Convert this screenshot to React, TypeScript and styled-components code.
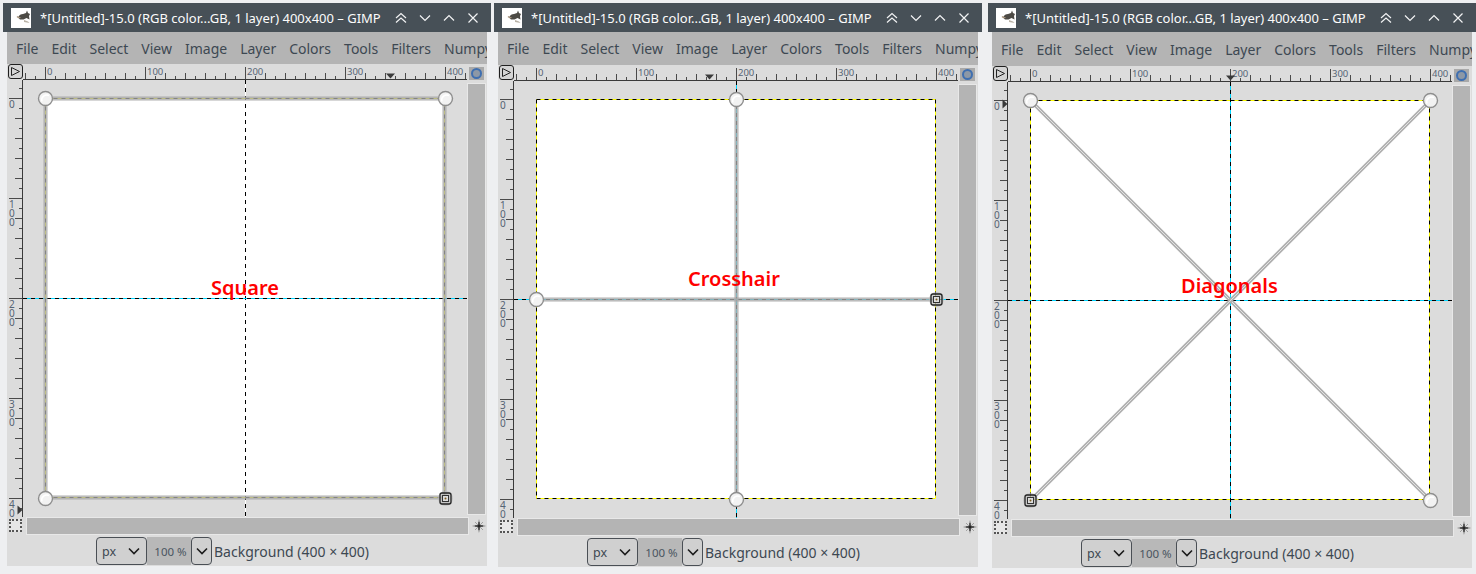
import React from "react";
import styled, { createGlobalStyle } from "styled-components";

const Global = createGlobalStyle`
  html, body { margin: 0; padding: 0; background: #eeeff1; overflow: hidden; }
  body { font-family: "Noto Sans", sans-serif; }
`;

const Page = styled.div`
  width: 1476px;
  height: 574px;
  background: #eeeff1;
  padding: 3px 0 0 3px;
  box-sizing: border-box;
  display: flex;
  overflow: hidden;
`;

const Frame = styled.section<{ $gap: number }>`
  width: 488px;
  flex: none;
  margin-right: ${(p) => p.$gap}px;
  display: flex;
  flex-direction: column;
  background: #eeeff1;
  position: relative;
  &::before, &::after {
    content: "";
    position: absolute;
    bottom: -4px;
    width: 3px;
    height: 3px;
    border-bottom: 1px solid #56616b;
  }
  &::before { left: 0; border-left: 1px solid #56616b; }
  &::after { right: 0; border-right: 1px solid #56616b; }
`;

const TitleBar = styled.header`
  height: 29px;
  background: #475057;
  color: #fcfcfc;
  display: flex;
  align-items: center;
  padding-left: 8px;
  font-size: 13px;
  white-space: nowrap;
`;

const TitleText = styled.span`
  margin-left: 9px;
  flex: 1;
`;

const TitleButtons = styled.div`
  display: flex;
  margin-right: 6px;
`;

const TitleButton = styled.svg`
  width: 24px;
  height: 16px;
  fill: none;
  stroke: #f2f3f4;
  stroke-width: 1.2;
`;

const Body = styled.div`
  margin: 0 4px;
  background: #dcdcdc;
  display: flex;
  flex-direction: column;
`;

const MenuBar = styled.nav<{ $h: number }>`
  height: ${(p) => p.$h}px;
  background: #b4b4b4;
  display: flex;
  align-items: center;
  overflow: hidden;
  padding-left: 9px;
  gap: 13px;
  color: #3d4852;
  font-size: 14px;
  white-space: nowrap;
`;

const Workspace = styled.div`
  display: grid;
  grid-template-columns: 16px 444px 20px;
  grid-template-rows: 16px 437px 20px;
`;

const CornerButton = styled.div`
  width: 15px;
  height: 15px;
  margin-left: 1px;
  box-sizing: border-box;
  border: 1px solid #1f1f1f;
  border-radius: 3px;
  background: #d4d4d4;
  display: flex;
  align-items: center;
  justify-content: center;
`;

const RulerSvg = styled.svg`
  display: block;
  font-family: "Noto Sans", sans-serif;
  font-size: 9.5px;
  fill: #566475;
`;

const QuickMask = styled.div`
  width: 15px;
  height: 13px;
  margin: 3px 0 0 2px;
  background: #a9a9a9;
  display: flex;
  align-items: center;
  justify-content: center;
  &::after {
    content: "";
    width: 7px;
    height: 7px;
    border: 2px solid #3f6fb0;
    border-radius: 50%;
    background: #8d98a6;
  }
`;

const Viewport = styled.div`
  position: relative;
  overflow: hidden;
  padding: 18px 0 0 22px;
  box-sizing: border-box;
`;

const Canvas = styled.div`
  width: 400px;
  height: 400px;
  background: #fff;
`;

const Overlay = styled.svg`
  position: absolute;
  left: 0;
  top: 0;
  width: 444px;
  height: 437px;
`;

const Annotation = styled.span<{ $x: number; $y: number }>`
  position: absolute;
  left: ${(p) => p.$x}px;
  top: ${(p) => p.$y}px;
  color: #ff0000;
  font-size: 20px;
  font-weight: 600;
  line-height: 24px;
  white-space: nowrap;
`;

const VScroll = styled.div`
  margin: 3px 1px 2px 0;
  background: #b4b4b4;
  border: 1px solid #e8e8e8;
`;

const HScroll = styled.div`
  margin: 0 -2px 2px 3px;
  background: #b4b4b4;
  border: 1px solid #e8e8e8;
`;

const DottedSquare = styled.div`
  width: 13px;
  height: 13px;
  margin: 2px 0 0 2px;
  box-sizing: border-box;
  border: 2px dotted #555;
  background: #e6e6e6;
`;

const NavCell = styled.div`
  display: flex;
  align-items: center;
  justify-content: center;
  padding: 0 0 3px 4px;
`;

const StatusBar = styled.footer`
  height: 29px;
  box-sizing: border-box;
  display: flex;
  align-items: center;
  padding: 0 0 1px 89px;
  font-size: 14px;
  color: #3d4852;
  white-space: nowrap;
`;

const Combo = styled.div`
  width: 51px;
  height: 28px;
  box-sizing: border-box;
  border: 1px solid #4a4f55;
  border-radius: 4px;
  background: #d0d0d0;
  display: flex;
  align-items: center;
  justify-content: space-between;
  padding: 0 6px 0 5px;
  font-size: 12.5px;
`;

const ZoomField = styled.div`
  width: 44px;
  height: 28px;
  box-sizing: border-box;
  padding-left: 3px;
  background: #b8b8b8;
  display: flex;
  align-items: center;
  justify-content: center;
  font-size: 11.5px;
  color: #4a5560;
`;

const ZoomButton = styled.div`
  width: 21px;
  height: 28px;
  box-sizing: border-box;
  border: 1px solid #4a4f55;
  border-radius: 4px;
  background: #d0d0d0;
  display: flex;
  align-items: center;
  justify-content: center;
`;

const LayerLabel = styled.span`
  margin-left: 2px;
`;

const Chevron = () => (
  <svg width="12" height="8" viewBox="0 0 12 8" fill="none" stroke="#1c1c1c" strokeWidth="1.6">
    <path d="M1 1.5 6 6.5 11 1.5" />
  </svg>
);

const Wilber = () => (
  <svg width="20" height="20" viewBox="0 0 20 20">
    <rect width="20" height="20" fill="#fff" />
    <path d="M7 9.5c1-2.5 3-3.5 5-3.5l3-1 1-2.5 1 2.5 2 1-1 2 .5 3.5-3-1.5-3 1.5H9z" fill="#4c4a45" />
    <path d="M6 8.5c1 1 2 1.2 3.5 1" stroke="#a3917a" strokeWidth="1.2" fill="none" />
    <path d="M13 12l4 1.5 1.5 1.5-5.5-1z" fill="#b9b2a6" />
  </svg>
);

const WindowButtons = () => (
  <TitleButtons>
    <TitleButton viewBox="0 0 24 16">
      <path d="M7 8 12 3.5 17 8M7 12.5 12 8 17 12.5" />
    </TitleButton>
    <TitleButton viewBox="0 0 24 16">
      <path d="M7 5.5 12 10.5 17 5.5" />
    </TitleButton>
    <TitleButton viewBox="0 0 24 16">
      <path d="M7 10.5 12 5.5 17 10.5" />
    </TitleButton>
    <TitleButton viewBox="0 0 24 16">
      <path d="M7.5 3.5 16.5 12.5M16.5 3.5 7.5 12.5" />
    </TitleButton>
  </TitleButtons>
);

const HRuler = ({ marker }: { marker: number }) => {
  const ticks: React.ReactNode[] = [];
  for (let v = -20; v <= 420; v += 10) {
    const x = v + 22.5;
    const major = v % 100 === 0;
    const mid = v % 20 === 0;
    const y = major ? 3 : mid ? 9 : 12;
    ticks.push(<line key={v} x1={x} x2={x} y1={y} y2={15} stroke="#4a4a4a" strokeWidth="1" />);
  }
  return (
    <RulerSvg width="444" height="16" viewBox="0 0 444 16">
      <line x1="0" x2="444" y1="15.5" y2="15.5" stroke="#3a3a3a" />
      {ticks}
      {[0, 100, 200, 300, 400].map((v) => (
        <text key={v} x={v + 24} y={11}>
          {v}
        </text>
      ))}
      <path d={`M${marker - 4} 9.5h9l-4.5 5z`} fill="#3a3a3a" />
    </RulerSvg>
  );
};

const VRuler = ({ marker, top }: { marker: number; top: number }) => {
  const ticks: React.ReactNode[] = [];
  for (let v = -10; v <= 410; v += 10) {
    const y = v + top + 0.5;
    const major = v % 100 === 0;
    const mid = v % 20 === 0;
    const x = major ? 2 : mid ? 8 : 12;
    ticks.push(<line key={v} x1={x} x2={15} y1={y} y2={y} stroke="#4a4a4a" strokeWidth="1" />);
  }
  return (
    <RulerSvg width="16" height="437" viewBox="0 0 16 437">
      <line x1="15.5" x2="15.5" y1="0" y2="437" stroke="#3a3a3a" />
      {ticks}
      {[0, 100, 200, 300, 400].map((v) =>
        String(v)
          .slice(0, 3)
          .split("")
          .map((d, i) => (
            <text key={`${v}-${i}`} x={2} y={v + top + 10 + i * 9} fontSize="10">
              {d}
            </text>
          ))
      )}
      <path d={`M10.5 ${marker - 4.5}v9l5-4.5z`} fill="#3a3a3a" />
    </RulerSvg>
  );
};

const X0 = 22.5;
const Y0 = 18.5;
const X1 = X0 + 399;
const Y1 = Y0 + 399;
const XM = X0 + 200;
const YM = Y0 + 200;

type Seg = { x1: number; y1: number; x2: number; y2: number };

const Dash = ({ x1, y1, x2, y2, under }: Seg & { under: string }) => (
  <g>
    <line x1={x1} y1={y1} x2={x2} y2={y2} stroke={under} strokeWidth="1" />
    <line x1={x1} y1={y1} x2={x2} y2={y2} stroke="#000" strokeWidth="1" strokeDasharray="4 4" />
  </g>
);

const Boundary = () => (
  <g>
    <Dash x1={X0} y1={Y0} x2={X1} y2={Y0} under="#ffff00" />
    <Dash x1={X1} y1={Y0} x2={X1} y2={Y1} under="#ffff00" />
    <Dash x1={X0} y1={Y1} x2={X1} y2={Y1} under="#ffff00" />
    <Dash x1={X0} y1={Y0} x2={X0} y2={Y1} under="#ffff00" />
  </g>
);

const ToolLine = ({ x1, y1, x2, y2 }: Seg) => (
  <g>
    <line x1={x1} y1={y1} x2={x2} y2={y2} stroke="#a6a6a6" strokeOpacity="0.45" strokeWidth="5" />
    <line x1={x1} y1={y1} x2={x2} y2={y2} stroke="#aaa" strokeOpacity="0.6" strokeWidth="3" />
  </g>
);

const Handle = ({ x, y }: { x: number; y: number }) => (
  <g>
    <circle cx={x} cy={y} r="7" fill="#f2f2f2" stroke="#8e8e8e" strokeWidth="1.4" />
    <path d={`M${x - 3.5} ${y + 3}a5 5 0 0 1 7-6`} fill="none" stroke="#fff" strokeWidth="1.5" />
  </g>
);

const ActiveHandle = ({ x, y }: { x: number; y: number }) => (
  <g>
    <circle cx={x} cy={y} r="7.5" fill="#bbb" fillOpacity="0.7" />
    <rect x={x - 5.5} y={y - 5.5} width="11" height="11" rx="2" fill="none" stroke="#222" strokeWidth="1.3" />
    <rect x={x - 3} y={y - 3} width="6" height="6" fill="#ddd" stroke="#333" strokeWidth="1" />
    <circle cx={x} cy={y} r="1" fill="#7a5b20" />
  </g>
);

const HX = X0 + 400;
const HY = Y0 + 400;

const SquareOverlay = () => (
  <Overlay viewBox="0 0 444 437">
    <Dash x1={XM} y1={0} x2={XM} y2={437} under="#fff" />
    <Dash x1={0} y1={YM} x2={444} y2={YM} under="#00d5ff" />
    <Boundary />
    <ToolLine x1={X0} y1={Y0} x2={X1} y2={Y0} />
    <ToolLine x1={X1} y1={Y0} x2={X1} y2={Y1} />
    <ToolLine x1={X0} y1={Y1} x2={X1} y2={Y1} />
    <ToolLine x1={X0} y1={Y0} x2={X0} y2={Y1} />
    <Handle x={X0} y={Y0} />
    <Handle x={HX} y={Y0} />
    <Handle x={X0} y={HY} />
    <ActiveHandle x={HX} y={HY} />
  </Overlay>
);

const CrossOverlay = () => (
  <Overlay viewBox="0 0 444 437">
    <Boundary />
    <Dash x1={XM} y1={0} x2={XM} y2={437} under="#00d5ff" />
    <Dash x1={0} y1={YM} x2={444} y2={YM} under="#00d5ff" />
    <ToolLine x1={XM} y1={Y0} x2={XM} y2={Y1} />
    <ToolLine x1={X0} y1={YM} x2={X1} y2={YM} />
    <Handle x={XM} y={Y0} />
    <Handle x={X0} y={YM} />
    <Handle x={XM} y={HY} />
    <ActiveHandle x={HX} y={YM} />
  </Overlay>
);

const DiagonalLine = ({ x1, y1, x2, y2 }: Seg) => (
  <g>
    <line x1={x1} y1={y1} x2={x2} y2={y2} stroke="#b0b0b0" strokeWidth="3.8" />
    <line x1={x1} y1={y1} x2={x2} y2={y2} stroke="#e2e2e2" strokeWidth="1" />
  </g>
);

const DiagonalOverlay = () => (
  <Overlay viewBox="0 0 444 437">
    <Boundary />
    <Dash x1={XM} y1={0} x2={XM} y2={437} under="#00d5ff" />
    <Dash x1={0} y1={YM} x2={444} y2={YM} under="#00d5ff" />
    <DiagonalLine x1={X0} y1={Y0} x2={HX} y2={HY} />
    <DiagonalLine x1={HX} y1={Y0} x2={X0} y2={HY} />
    <Handle x={X0} y={Y0} />
    <Handle x={HX} y={Y0} />
    <Handle x={HX} y={HY} />
    <ActiveHandle x={X0} y={HY} />
  </Overlay>
);

const NavIcon = () => (
  <svg width="18" height="18" viewBox="0 0 18 18">
    <path d="M4.5 4.5 13.5 13.5M13.5 4.5 4.5 13.5" stroke="#999" strokeWidth="1" />
    <path d="M9 1 9.8 8.2 17 9 9.8 9.8 9 17 8.2 9.8 1 9 8.2 8.2z" fill="#222" />
    <path d="M9 4.5v9M4.5 9h9" stroke="#222" strokeWidth="1" />
  </svg>
);

const MENU = ["File", "Edit", "Select", "View", "Image", "Layer", "Colors", "Tools", "Filters", "Numpy"];

type GimpWindowProps = {
  shift: number;
  gap: number;
  hMarker: number;
  vMarker: number;
  label: string;
  labelX: number;
  labelY: number;
  overlay: React.ReactNode;
};

const GimpWindow = ({ shift, gap, hMarker, vMarker, label, labelX, labelY, overlay }: GimpWindowProps) => (
  <Frame $gap={gap}>
    <TitleBar>
      <Wilber />
      <TitleText>*[Untitled]-15.0 (RGB color...GB, 1 layer) 400x400 – GIMP</TitleText>
      <WindowButtons />
    </TitleBar>
    <Body>
      <MenuBar $h={32 + shift}>
        {MENU.map((m) => (
          <span key={m}>{m}</span>
        ))}
      </MenuBar>
      <Workspace>
        <CornerButton>
          <svg width="11" height="11" viewBox="0 0 11 11" fill="none" stroke="#222" strokeWidth="1">
            <path d="M1.5 1.5 9.5 5.5 1.5 9.5z" />
          </svg>
        </CornerButton>
        <HRuler marker={hMarker} />
        <QuickMask />
        <VRuler marker={vMarker} top={18} />
        <Viewport>
          <Canvas />
          {overlay}
          <Annotation $x={labelX} $y={labelY}>
            {label}
          </Annotation>
        </Viewport>
        <VScroll />
        <DottedSquare />
        <HScroll />
        <NavCell>
          <NavIcon />
        </NavCell>
      </Workspace>
      <StatusBar>
        <Combo>
          <span>px</span>
          <Chevron />
        </Combo>
        <ZoomField>100 %</ZoomField>
        <ZoomButton>
          <Chevron />
        </ZoomButton>
        <LayerLabel>Background (400 × 400)</LayerLabel>
      </StatusBar>
    </Body>
  </Frame>
);

export default function App() {
  return (
    <Page>
      <Global />
      <GimpWindow shift={0} gap={3} hMarker={367} vMarker={430} label="Square" labelX={188} labelY={196} overlay={<SquareOverlay />} />
      <GimpWindow shift={1} gap={6} hMarker={195} vMarker={-20} label="Crosshair" labelX={174} labelY={186} overlay={<CrossOverlay />} />
      <GimpWindow shift={2} gap={0} hMarker={222} vMarker={22} label="Diagonals" labelX={173} labelY={192} overlay={<DiagonalOverlay />} />
    </Page>
  );
}
